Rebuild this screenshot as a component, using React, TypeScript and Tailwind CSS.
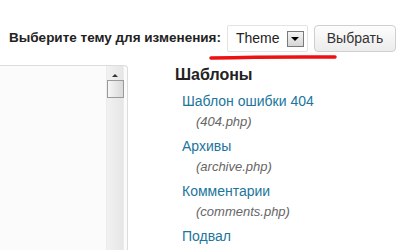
import React from 'react';

const templates = [
  { title: 'Шаблон ошибки 404', file: '(404.php)' },
  { title: 'Архивы', file: '(archive.php)' },
  { title: 'Комментарии', file: '(comments.php)' },
  { title: 'Подвал', file: '' },
];

export default function App() {
  return (
    <div className="relative w-[400px] h-[250px] overflow-hidden bg-white font-['Liberation_Sans',Arial,sans-serif]">
      {/* theme picker */}
      <div className="flex items-center mt-[25px] pl-[9px] h-[27px]">
        <span className="shrink-0 whitespace-nowrap text-[13.5px] font-bold text-[#222]">
          Выберите тему для изменения:
        </span>
        <div className="shrink-0 ml-[6px] flex items-center h-[27px] w-[81px] border border-[#e3e3e3] rounded-[2px] bg-white pl-[8px] pr-[3px]">
          <span className="text-[14px] text-[#222] flex-1">Theme</span>
          <span className="flex items-center justify-center w-[17px] h-[16px] border border-[#7a7a7a] bg-gradient-to-b from-[#f4f4f4] to-[#d6d6d6]">
            <span className="w-0 h-0 border-l-[4px] border-r-[4px] border-t-[4px] border-l-transparent border-r-transparent border-t-black" />
          </span>
        </div>
        <button className="shrink-0 ml-[6px] h-[27px] w-[82px] rounded-[4px] border border-[#cfcfcf] bg-gradient-to-b from-[#fdfdfd] to-[#ececec] text-[14px] text-[#333]">
          Выбрать
        </button>
      </div>

      <div className="flex mt-[13px]">
        {/* editor textarea */}
        <div className="flex w-[128px] h-[190px] border-t border-r border-[#dcdcdc] rounded-tr-[4px] bg-[#fbfbfb]">
          <div className="flex-1" />
          <div className="flex flex-col items-center w-[18px] mr-[3px] border-l border-r border-[#ececec] bg-gradient-to-r from-[#f1f1f1] to-[#e6e6e6]">
            <div className="h-[14px] flex items-end pb-[3px]">
              <span className="w-0 h-0 border-l-[3px] border-r-[3px] border-b-[3px] border-l-transparent border-r-transparent border-b-[#333]" />
            </div>
            <div className="w-[17px] h-[18px] border border-[#9a9a9a] bg-gradient-to-r from-[#f6f6f6] to-[#d9d9d9]" />
          </div>
        </div>

        {/* template list */}
        <div className="ml-[47px] mt-0">
          <div className="text-[16px] font-bold text-[#222] leading-[20px]">Шаблоны</div>
          <ul className="mt-[8px] pl-[7px]">
            {templates.map((t) => (
              <li key={t.title} className="h-[45px]">
                <div className="text-[14px] leading-[16px] text-[#21759b]">{t.title}</div>
                {t.file && (
                  <div className="mt-[5px] pl-[14px] text-[13px] leading-[15px] italic text-[#666]">
                    {t.file}
                  </div>
                )}
              </li>
            ))}
          </ul>
        </div>
      </div>

      {/* red marker underline */}
      <svg className="absolute left-[208px] top-[52px]" width="130" height="10" viewBox="0 0 130 10">
        <path d="M3 6 Q60 4.5 127 5" stroke="#ee1111" strokeWidth="3.5" strokeLinecap="round" fill="none" />
      </svg>
    </div>
  );
}
